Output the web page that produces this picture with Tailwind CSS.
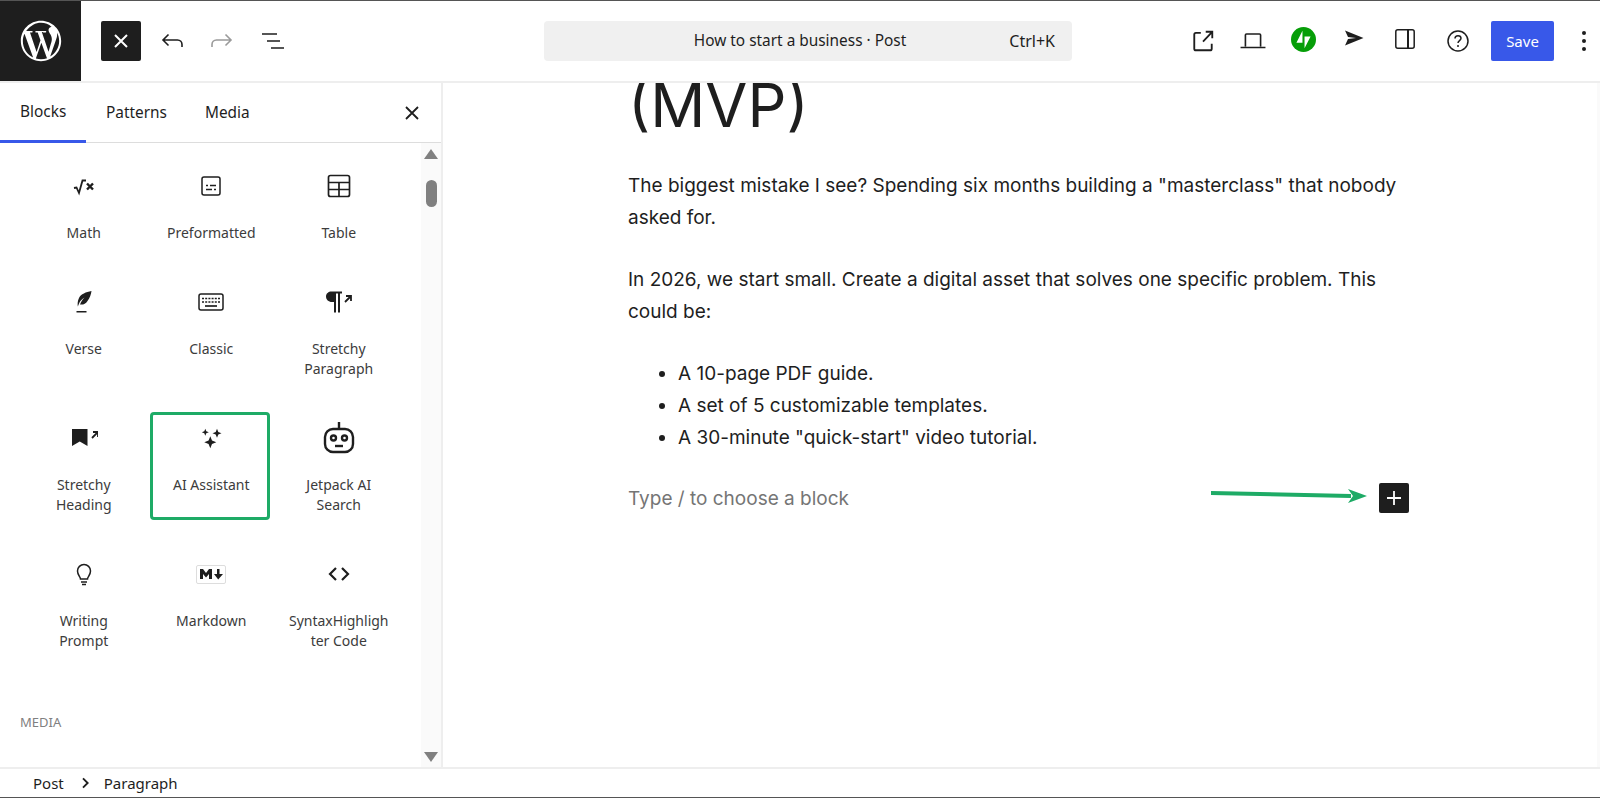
<!DOCTYPE html>
<html lang="en">
<head>
    <meta charset="UTF-8">
    <title>How to start a business - Post</title>
    <script src="https://cdn.jsdelivr.net/npm/@tailwindcss/browser@4"></script>
</head>
<body class="bg-white font-['Noto_Sans',sans-serif] text-[#1e1e1e] overflow-hidden">
<div class="h-[798px] w-[1600px] flex flex-col border-t border-b border-[#555] ">

    <!-- Top bar -->
    <header class="h-[82px] shrink-0 flex items-center border-b-2 border-[#eeeeee]">
        <div class="w-[81px] h-[80px] bg-[#1e1e1e] flex items-center justify-center shrink-0">
            <svg viewBox="0 0 24 24" class="w-[44px] h-[44px]" fill="#fff"><path d="M12 1C5.900 1 1 5.900 1 12s4.900 11 11 11 11-4.900 11-11S18.100 1 12 1zM2.100 12c0-1.400.3-2.800.9-4l4.700 13C4.400 19.400 2.100 16 2.100 12zm9.900 9.900c-1 0-1.900-.1-2.800-.4l3-8.600 3 8.400.1.100c-1 .3-2.100.5-3.300.5zm1.400-14.500c.6 0 1.100-.1 1.100-.1.500-.1.500-.8 0-.8 0 0-1.600.1-2.600.1-1 0-2.600-.1-2.600-.1-.5 0-.6.800-.1.800 0 0 .5.100 1 .1l1.500 4.200-2.100 6.400-3.600-10.600c.6 0 1.100-.1 1.100-.1.500-.1.500-.8 0-.8 0 0-1.600.1-2.600.1h-.6C6.400 3.500 9 2.100 12 2.100c2.200 0 4.300.8 5.800 2.200h-.1c-1 0-1.600.8-1.600 1.700 0 .8.500 1.500 1 2.300.4.700.8 1.500.8 2.800 0 .9-.3 1.900-.8 3.300l-1 3.400-3.700-10.900zm3.600 13.100l3-8.700c.6-1.400.8-2.500.8-3.500 0-.4 0-.7-.1-1 .8 1.400 1.200 3 1.200 4.700 0 3.600-2 6.800-4.900 8.500z"/></svg>
        </div>
        <div class="flex items-center ml-[20px]">
            <button class="w-[40px] h-[40px] bg-[#1e1e1e] rounded-[2px] flex items-center justify-center">
                <svg viewBox="0 0 24 24" class="w-[24px] h-[24px]" fill="none" stroke="#fff" stroke-width="2"><path d="M6 6l12 12M18 6L6 18"/></svg>
            </button>
            <svg viewBox="0 0 24 24" class="w-[24px] h-[24px] ml-[19px]" fill="none" stroke="#1e1e1e" stroke-width="1.600"><path d="M22 18v-2.500c0-2.500-1.800-4.500-4.500-4.500H3M8.500 5.500L3 11l5.500 5.500"/></svg>
            <svg viewBox="0 0 24 24" class="w-[24px] h-[24px] ml-[26px]" fill="none" stroke="#9a9a9a" stroke-width="1.600"><path d="M2 18v-2.500c0-2.500 1.800-4.500 4.500-4.500H21M15.500 5.500L21 11l-5.500 5.500"/></svg>
            <svg viewBox="0 0 24 24" class="w-[24px] h-[24px] ml-[27px]" fill="none" stroke="#1e1e1e" stroke-width="1.600"><path d="M1 5h15M6 12h13M10 19h13"/></svg>
        </div>
        <div class="ml-[259px] w-[528px] h-[40px] bg-[#f0f0f0] rounded-[4px] flex items-center relative text-[15.4px] leading-[22px]">
            <span class="w-full text-center pr-[16px]">How to start a business · Post</span>
            <span class="absolute right-[17px] top-[9px] text-[16px]">Ctrl+K</span>
        </div>
        <div class="flex items-center ml-auto pr-[14px]">
            <svg viewBox="1 1 22 22" class="w-[24px] h-[24px]" fill="none" stroke="#1e1e1e" stroke-width="1.700"><path d="M10 4.500H5.500a1.500 1.500 0 0 0-1.500 1.500v13a1.500 1.500 0 0 0 1.500 1.500h13a1.500 1.500 0 0 0 1.500-1.500v-4.500"/><path d="M12 12.500l8-8.500M14.500 3.500h6v6"/></svg>
            <svg viewBox="0 0 24 24" class="w-[26px] h-[26px] ml-[25px]" fill="none" stroke="#1e1e1e" stroke-width="1.500"><path d="M5 17V6.500a1 1 0 0 1 1-1h12a1 1 0 0 1 1 1V17M0.500 18h23"/></svg>
            <svg viewBox="0 0 24 24" class="w-[25px] h-[25px] ml-[25px] -mt-[4px]"><circle cx="12" cy="12" r="12" fill="#069e08"/><path d="M11 3.500v11.500H5.200zM13 20.500V9h5.800z" fill="#fff"/></svg>
            <svg viewBox="0 0 24 24" class="w-[24px] h-[24px] ml-[26px] -mt-[6px]" fill="#1e1e1e"><path d="M3 4.500L21.500 12 3 19.500l3-6.500 8-1-8-1z"/></svg>
            <svg viewBox="0 0 24 24" class="w-[24px] h-[24px] ml-[27px] -mt-[5px]" fill="none" stroke="#1e1e1e" stroke-width="1.500"><rect x="2.800" y="2.800" width="18.400" height="18.400" rx="2"/><path d="M15 2.800v18.400" stroke-width="2"/></svg>
            <svg viewBox="0 0 24 24" class="w-[24px] h-[24px] ml-[29px]" fill="none" stroke="#1e1e1e" stroke-width="1.500"><circle cx="12" cy="12" r="10"/><path d="M9 9.500c0-1.700 1.300-2.800 3-2.800s3 1.100 3 2.600c0 2.300-3 2.400-3 4.700"/><circle cx="12" cy="17" r="1" fill="#1e1e1e" stroke="none"/></svg>
            <button class="ml-[21px] w-[63px] h-[40px] bg-[#3858e9] rounded-[2px] text-white text-[15px]">Save</button>
            <svg viewBox="0 0 4 24" class="w-[4px] h-[24px] ml-[28px]" fill="#1e1e1e"><circle cx="2" cy="4" r="2"/><circle cx="2" cy="12" r="2"/><circle cx="2" cy="20" r="2"/></svg>
        </div>
    </header>

    <div class="flex-1 flex min-h-0">
        <!-- Inserter panel -->
        <aside class="w-[443px] shrink-0 border-r-2 border-[#eeeeee] flex flex-col">
            <div class="h-[60px] shrink-0 flex items-center border-b border-[#dddddd] text-[15.4px] relative">
                <span class="w-[86px] h-[60px] flex items-center pl-[20px] border-b-[3px] border-[#3858e9] pt-[2px]">Blocks</span>
                <span class="ml-[20px]">Patterns</span>
                <span class="ml-[38px]">Media</span>
                <svg viewBox="0 0 24 24" class="w-[24px] h-[24px] ml-auto mr-[17px]" fill="none" stroke="#1e1e1e" stroke-width="1.800"><path d="M6 6l12 12M18 6L6 18"/></svg>
            </div>
            <div class="flex-1 flex min-h-0 overflow-hidden">
                <div class="flex-1 pl-[20px] pt-[23px] min-w-0">
                    <div class="grid grid-cols-[127.5px_127.5px_127.5px] grid-rows-[116px_136px_136px_136px] text-[14px] leading-[20px] text-[#3c3c3c] text-center">
                        <div class="flex flex-col items-center">
                            <div class="h-[40px] flex items-center justify-center"><svg viewBox="0 0 24 24" class="w-[24px] h-[24px]" fill="none" stroke="#1e1e1e" stroke-width="1.800"><path d="M2 14l2.500-.5 2.500 5.500 3.500-12.500H14"/><path d="M15 9.500l6 6M21 9.500l-6 6" stroke-width="2.400"/></svg></div>
                            <span class="mt-[17px]">Math</span>
                        </div>
                        <div class="flex flex-col items-center">
                            <div class="h-[40px] flex items-center justify-center"><svg viewBox="0 0 24 24" class="w-[24px] h-[24px]" fill="none" stroke="#1e1e1e" stroke-width="1.500"><rect x="3" y="3" width="18" height="18" rx="2"/><path d="M7 11.500h2M11 11.500h6M7 15.500h6M15 15.500h2"/></svg></div>
                            <span class="mt-[17px]">Preformatted</span>
                        </div>
                        <div class="flex flex-col items-center">
                            <div class="h-[40px] flex items-center justify-center"><svg viewBox="0 0 24 24" class="w-[24px] h-[24px]" fill="none" stroke="#1e1e1e" stroke-width="1.700"><rect x="1.500" y="1.500" width="21" height="21" rx="2"/><path d="M1.500 8.500h21M1.500 15.500h21M12 8.500v14"/></svg></div>
                            <span class="mt-[17px]">Table</span>
                        </div>

                        <div class="flex flex-col items-center">
                            <div class="h-[40px] flex items-center justify-center"><svg viewBox="0 0 24 24" class="w-[24px] h-[24px]" fill="#1e1e1e"><path d="M19.500 1c-5.500 1-10.500 3-12.500 7-1.500 3-1.500 6-1.200 8.500l1.700-4c1-2 3-4 5-5-2 2-3.500 4-4.500 7 3 .5 5.500-.5 7.500-3.500 2.500-3.500 3.500-6.500 4-10zM4.500 21h10v1.500h-10z"/></svg></div>
                            <span class="mt-[17px]">Verse</span>
                        </div>
                        <div class="flex flex-col items-center">
                            <div class="h-[40px] flex items-center justify-center"><svg viewBox="0 0 26 24" class="w-[26px] h-[24px]" fill="none" stroke="#1e1e1e" stroke-width="1.500"><rect x="1" y="4" width="24" height="16" rx="2"/><path d="M4 8.500h18M4 12h18" stroke-dasharray="2 1.200" stroke-width="1.700"/><path d="M7 16h12" stroke-width="1.700"/></svg></div>
                            <span class="mt-[17px]">Classic</span>
                        </div>
                        <div class="flex flex-col items-center">
                            <div class="h-[40px] flex items-center justify-center"><svg viewBox="0 0 28 24" class="w-[28px] h-[24px]" fill="#1e1e1e"><path d="M1 6.500C1 3.500 3.500 1.500 6.500 1.500H17v2h-2v19h-2v-19h-2v19H9V12H7C3.500 12 1 9.500 1 6.500z"/><path d="M20 12l5.500-5.500M21 6h5v5" fill="none" stroke="#1e1e1e" stroke-width="1.800"/></svg></div>
                            <span class="mt-[17px] w-[84px]">Stretchy Paragraph</span>
                        </div>

                        <div class="flex flex-col items-center">
                            <div class="h-[40px] flex items-center justify-center"><svg viewBox="-2 0 28 24" class="w-[28px] h-[24px]" fill="#1e1e1e"><path d="M0 3h15.500v17l-7.750-4.500L0 20z"/><path d="M20 12l5.500-5.500M21 6h5v5" fill="none" stroke="#1e1e1e" stroke-width="1.800"/></svg></div>
                            <span class="mt-[17px] w-[84px]">Stretchy Heading</span>
                        </div>
                        <div class="relative flex flex-col items-center">
                            <div class="absolute left-[2px] -top-[6px] w-[120px] h-[108px] border-[3px] border-[#1eab66] rounded-[4px]"></div>
                            <div class="h-[40px] flex items-center justify-center"><svg viewBox="0 0 24 24" class="w-[24px] h-[24px]" fill="#1e1e1e"><path d="M6.300 2.800l1 2.500 2.500 1-2.500 1-1 2.500-1-2.500-2.500-1 2.500-1z"/><path d="M18 2.800l1.300 3.200 3.200 1.300-3.200 1.300-1.300 3.200-1.300-3.200-3.200-1.300 3.200-1.300z"/><path d="M11.300 10.300l1.700 4.300 4.300 1.700-4.300 1.700-1.700 4.300-1.700-4.300-4.300-1.700 4.300-1.700z"/></svg></div>
                            <span class="mt-[17px]">AI Assistant</span>
                        </div>
                        <div class="flex flex-col items-center">
                            <div class="h-[40px] flex items-center justify-center"><svg viewBox="0 0 32 32" class="w-[32px] h-[32px]" fill="none" stroke="#1e1e1e" stroke-width="2.400"><rect x="2" y="7" width="28" height="23" rx="8"/><path d="M16 0v7"/><circle cx="10.500" cy="16" r="2.500"/><circle cx="21.500" cy="16" r="2.500"/><path d="M12 24h8"/></svg></div>
                            <span class="mt-[17px] w-[84px]">Jetpack AI Search</span>
                        </div>

                        <div class="flex flex-col items-center">
                            <div class="h-[40px] flex items-center justify-center"><svg viewBox="0 0 24 24" class="w-[24px] h-[24px]" fill="none" stroke="#1e1e1e" stroke-width="1.500"><path d="M8.500 17c0-2-3-4-3-8a6.500 6.500 0 0 1 13 0c0 4-3 6-3 8zM9 20h6M10 22.500h4"/></svg></div>
                            <span class="mt-[17px] w-[84px]">Writing Prompt</span>
                        </div>
                        <div class="flex flex-col items-center">
                            <div class="h-[40px] flex items-center justify-center"><div class="w-[30px] h-[19px] border border-[#dddddd] rounded-[2px] flex items-center justify-center"><svg viewBox="0 0 26 14" class="w-[26px] h-[14px]" fill="#1e1e1e"><path d="M2 2h3l3 4 3-4h3v10h-3V7l-3 3.500L5 7v5H2zM19 2h2.500v5H25l-4.800 5.500L16 7h3z"/></svg></div></div>
                            <span class="mt-[17px]">Markdown</span>
                        </div>
                        <div class="flex flex-col items-center">
                            <div class="h-[40px] flex items-center justify-center"><svg viewBox="0 0 24 24" class="w-[24px] h-[24px]" fill="none" stroke="#1e1e1e" stroke-width="2.200"><path d="M9 6l-6 6 6 6M15 6l6 6-6 6"/></svg></div>
                            <span class="mt-[17px] w-[102px] break-all">SyntaxHighlighter Code</span>
                        </div>
                    </div>
                    <div class="text-[13px] leading-[20px] text-[#808080] mt-[22px]">MEDIA</div>
                </div>
                <!-- scrollbar -->
                <div class="w-[20px] shrink-0 bg-[#fafafa] flex flex-col items-center relative">
                    <div class="w-0 h-0 border-l-[7px] border-r-[7px] border-b-[10px] border-l-transparent border-r-transparent border-b-[#808080] mt-[6px]"></div>
                    <div class="w-[11px] h-[27px] bg-[#808080] rounded-[6px] mt-[21px]"></div>
                    <div class="w-0 h-0 border-l-[7px] border-r-[7px] border-t-[10px] border-l-transparent border-r-transparent border-t-[#808080] mt-auto mb-[5px]"></div>
                </div>
            </div>
        </aside>

        <!-- Canvas -->
        <main class="flex-1 min-w-0 relative overflow-hidden font-['Inter',sans-serif]">
            <div class="w-[781px] ml-[185px] -mt-[16px]">
                <h1 class="text-[61px] leading-[76px] font-normal">(MVP)</h1>
                <p class="text-[19px] leading-[32px] mt-[27px]">The biggest mistake I see? Spending six months building a "masterclass" that nobody asked for.</p>
                <p class="text-[19px] leading-[32px] mt-[30px]">In 2026, we start small. Create a digital asset that solves one specific problem. This could be:</p>
                <ul class="text-[19px] leading-[32px] mt-[30px] list-disc pl-[50px]">
                    <li>A 10-page PDF guide.</li>
                    <li>A set of 5 customizable templates.</li>
                    <li>A 30-minute "quick-start" video tutorial.</li>
                </ul>
                <div class="flex items-center justify-between mt-[27px] h-[34px]">
                    <span class="text-[19px] text-[#757575] pt-[2px]">Type / to choose a block</span>
                    <button class="w-[30px] h-[30px] bg-[#1e1e1e] rounded-[2px] flex items-center justify-center">
                        <svg viewBox="0 0 24 24" class="w-[24px] h-[24px]" fill="none" stroke="#fff" stroke-width="1.800"><path d="M12 5v14M5 12h14"/></svg>
                    </button>
                </div>
            </div>
            <!-- annotation arrow -->
            <svg class="absolute left-[768px] top-[399px] w-[160px] h-[30px]" viewBox="0 0 160 30" fill="#1eab66"><path d="M0 9l140 3v4L0 13z"/><path d="M156 14l-19 7 5-7-5-7z"/></svg>
            <!-- canvas scrollbar edge -->
            <div class="absolute right-0 top-0 bottom-0 w-[3px] bg-[#fafafa]"></div>
        </main>
    </div>

    <!-- Status bar -->
    <footer class="h-[30px] shrink-0 border-t-2 border-[#eeeeee] flex items-center text-[15px] text-[#1e1e1e]">
        <span class="ml-[33px]">Post</span>
        <svg viewBox="0 0 24 24" class="w-[16px] h-[16px] ml-[13px]" fill="none" stroke="#1e1e1e" stroke-width="2.800"><path d="M9 5l7 7-7 7"/></svg>
        <span class="ml-[11px]">Paragraph</span>
    </footer>
</div>
</body>
</html>
